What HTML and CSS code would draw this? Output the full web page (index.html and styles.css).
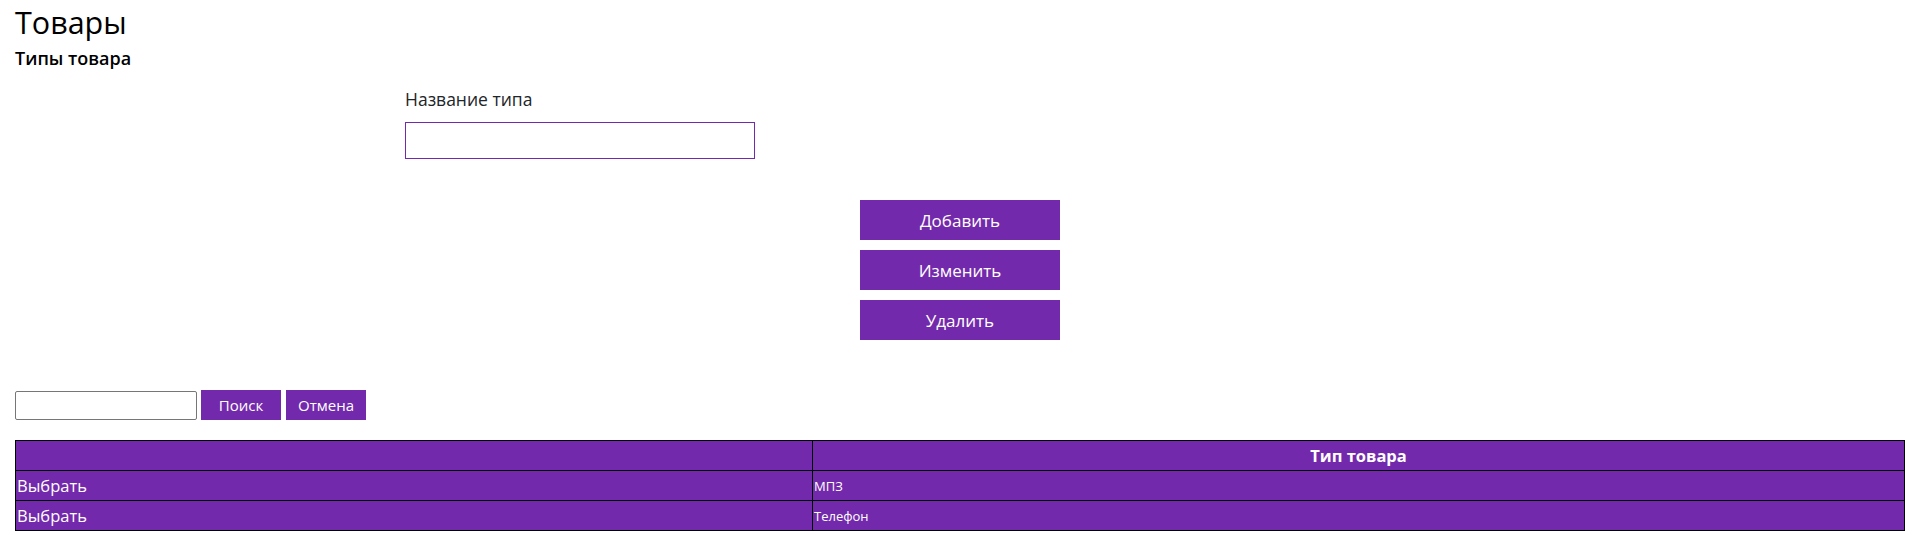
FILE: index.html
```html
<!DOCTYPE html>
<html lang="ru">
<head>
<meta charset="utf-8">
<title>Товары</title>
<link rel="stylesheet" href="styles.css">
</head>
<body>
<div class="page">
  <h1 class="title">Товары</h1>
  <h4 class="subtitle">Типы товара</h4>

  <div class="form">
    <label class="field-label" for="typeName">Название типа</label>
    <input class="field-input" id="typeName" type="text">
  </div>

  <div class="actions">
    <button class="btn-main">Добавить</button>
    <button class="btn-main">Изменить</button>
    <button class="btn-main">Удалить</button>
  </div>

  <div class="search">
    <input class="search-input" type="text">
    <button class="btn-small">Поиск</button>
    <button class="btn-small">Отмена</button>
  </div>

  <table class="grid">
    <thead>
      <tr><th class="col-sel"></th><th>Тип товара</th></tr>
    </thead>
    <tbody>
      <tr><td class="col-sel">Выбрать</td><td class="cell-small">МПЗ</td></tr>
      <tr><td class="col-sel">Выбрать</td><td class="cell-small">Телефон</td></tr>
    </tbody>
  </table>
</div>
</body>
</html>
```

FILE: styles.css
```css
* { box-sizing: border-box; }

body {
  margin: 0;
  background: #ffffff;
  color: #000000;
  font-family: "Open Sans", "Noto Sans", sans-serif;
}

.page {
  padding: 0 7px 0 15px;
}

.title {
  margin: 0;
  padding-top: 2px;
  font-size: 30.5px;
  font-weight: 400;
  line-height: 40px;
}

.subtitle {
  margin: 0;
  padding-top: 4px;
  font-size: 18px;
  font-weight: 600;
  line-height: 24px;
}

.form {
  display: flex;
  flex-direction: column;
  align-items: flex-start;
  padding-left: 390px;
  padding-top: 16px;
}

.field-label {
  font-size: 17.5px;
  line-height: 26px;
  color: #212529;
  margin-bottom: 10px;
}

.field-input {
  width: 350px;
  height: 37px;
  border: 1px solid #7329ab;
  border-radius: 0;
  outline: none;
  margin: 0;
}

.actions {
  display: flex;
  flex-direction: column;
  align-items: center;
  gap: 10px;
  padding-top: 41px;
}

.btn-main {
  width: 200px;
  height: 40px;
  border: none;
  background: #7329ab;
  color: #ffffff;
  font-family: "Open Sans", "Noto Sans", sans-serif;
  font-size: 17px;
  padding: 0;
  margin: 0;
}

.search {
  display: flex;
  align-items: center;
  gap: 4px;
  padding-top: 50px;
}

.search-input {
  width: 182px;
  height: 29px;
  border: 1px solid #767676;
  border-radius: 2px;
  margin: 0;
}

.btn-small {
  width: 80px;
  height: 30px;
  border: none;
  background: #7329ab;
  color: #ffffff;
  font-family: "Open Sans", "Noto Sans", sans-serif;
  font-size: 15px;
  padding: 0;
  margin: 0 1px 0 0;
}

.grid {
  width: 100%;
  margin-top: 20px;
  border-collapse: collapse;
  background: #7329ab;
  color: #ffffff;
}

.grid th,
.grid td {
  border: 1px solid #000000;
  height: 30px;
  padding: 0 1px;
  text-align: left;
  font-size: 16.5px;
  font-weight: 400;
}

.grid th {
  text-align: center;
  font-weight: 700;
}

.grid .col-sel {
  width: 797px;
}

.grid .cell-small {
  font-size: 13px;
}
```
